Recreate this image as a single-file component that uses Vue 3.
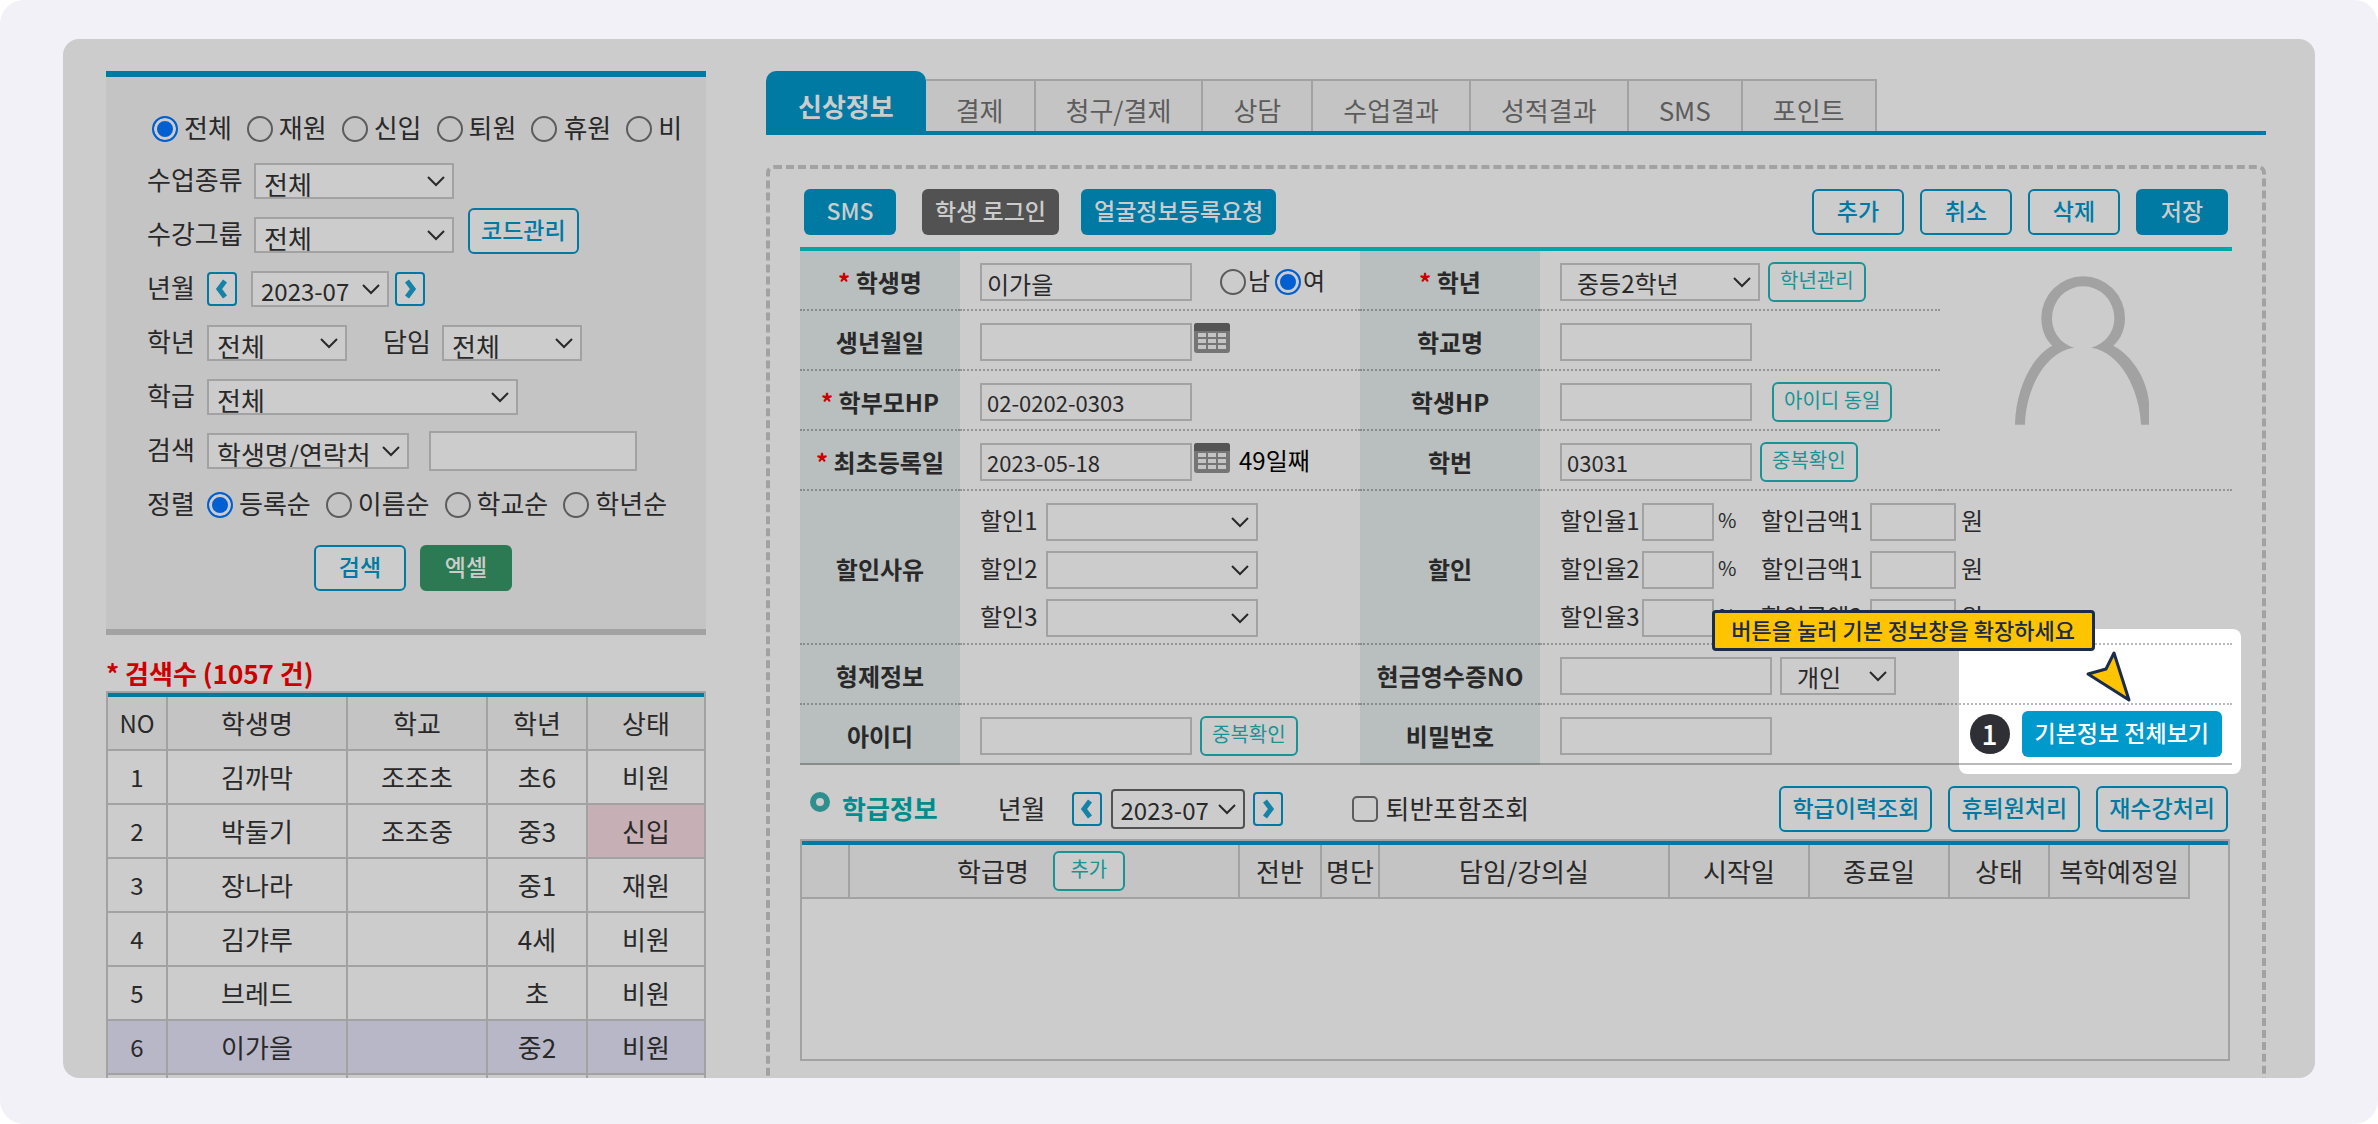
<script setup>
import { ref } from 'vue'

const statusOptions = ['전체', '재원', '신입', '퇴원', '휴원', '비']
const status = ref('전체')
const sortOptions = ['등록순', '이름순', '학교순', '학년순']
const sort = ref('등록순')
const gender = ref('여')

const students = [
  { no: 1, name: '김까막', school: '조조초', grade: '초6', state: '비원' },
  { no: 2, name: '박둘기', school: '조조중', grade: '중3', state: '신입' },
  { no: 3, name: '장나라', school: '', grade: '중1', state: '재원' },
  { no: 4, name: '김갸루', school: '', grade: '4세', state: '비원' },
  { no: 5, name: '브레드', school: '', grade: '초', state: '비원' },
  { no: 6, name: '이가을', school: '', grade: '중2', state: '비원' },
  { no: '', name: '', school: '', grade: '', state: '' },
]
const selectedNo = 6

const tabs = ['신상정보', '결제', '청구/결제', '상담', '수업결과', '성적결과', 'SMS', '포인트']
const activeTab = ref('신상정보')

const reasons = ['할인1', '할인2', '할인3']
const discounts = [
  { rate: '할인율1', amount: '할인금액1' },
  { rate: '할인율2', amount: '할인금액1' },
  { rate: '할인율3', amount: '할인금액2' },
]
</script>

<template>
  <div class="page">
    <div class="panel">
      <aside class="sidebar">
        <form class="search" @submit.prevent>
          <div class="line line-status">
            <label v-for="s in statusOptions" :key="s" class="radio">
              <input v-model="status" type="radio" name="status" :value="s" /><span>{{ s }}</span>
            </label>
          </div>
          <div class="line">
            <label class="wide" for="kind">수업종류</label>
            <select id="kind" class="w200"><option>전체</option></select>
          </div>
          <div class="line">
            <label class="wide" for="group">수강그룹</label>
            <select id="group" class="w200"><option>전체</option></select>
            <button type="button" class="btn outline btn-code">코드관리</button>
          </div>
          <div class="line">
            <label class="short" for="month">년월</label>
            <button type="button" class="step" aria-label="이전 달">
              <svg viewBox="0 0 26 30"><path d="M16 7 L10 15 L16 23" /></svg>
            </button>
            <select id="month" class="month"><option>2023-07</option></select>
            <button type="button" class="step" aria-label="다음 달">
              <svg viewBox="0 0 26 30"><path d="M10 7 L16 15 L10 23" /></svg>
            </button>
          </div>
          <div class="line">
            <label class="short" for="grade">학년</label>
            <select id="grade" class="w140"><option>전체</option></select>
            <label class="teacher" for="teacher">담임</label>
            <select id="teacher" class="w140"><option>전체</option></select>
          </div>
          <div class="line">
            <label class="short" for="class">학급</label>
            <select id="class" class="w310"><option>전체</option></select>
          </div>
          <div class="line">
            <label class="short" for="field">검색</label>
            <select id="field" class="w202"><option>학생명/연락처</option></select>
            <input class="keyword" type="text" aria-label="검색어" />
          </div>
          <div class="line">
            <span class="short">정렬</span>
            <label v-for="s in sortOptions" :key="s" class="radio">
              <input v-model="sort" type="radio" name="sort" :value="s" /><span>{{ s }}</span>
            </label>
          </div>
          <div class="search-actions">
            <button type="submit" class="btn outline">검색</button>
            <button type="button" class="btn excel">엑셀</button>
          </div>
        </form>

        <h2 class="count">* 검색수 (1057 건)</h2>
        <div class="list">
          <table>
            <colgroup><col class="c60" /><col class="c180" /><col class="c140" /><col class="c100" /><col /></colgroup>
            <thead>
              <tr><th class="num">NO</th><th>학생명</th><th>학교</th><th>학년</th><th>상태</th></tr>
            </thead>
            <tbody>
              <tr v-for="s in students" :key="s.no" :class="{ selected: s.no === selectedNo }">
                <td class="num">{{ s.no }}</td>
                <td>{{ s.name }}</td>
                <td>{{ s.school }}</td>
                <td>{{ s.grade }}</td>
                <td :class="{ fresh: s.state === '신입' }">{{ s.state }}</td>
              </tr>
            </tbody>
          </table>
        </div>
      </aside>

      <main class="main">
        <nav class="tabs">
          <button
            v-for="t in tabs" :key="t" type="button"
            :class="['tab', { active: t === activeTab }]" @click="activeTab = t"
          >{{ t }}</button>
        </nav>

        <section class="detail">
          <div class="toolbar">
            <button type="button" class="btn solid sms">SMS</button>
            <button type="button" class="btn dark">학생 로그인</button>
            <button type="button" class="btn solid face">얼굴정보등록요청</button>
            <div class="toolbar-right">
              <button type="button" class="btn outline">추가</button>
              <button type="button" class="btn outline">취소</button>
              <button type="button" class="btn outline">삭제</button>
              <button type="button" class="btn solid">저장</button>
            </div>
          </div>

          <div class="info-wrap">
            <div class="spotlight"></div>
            <table class="info">
              <colgroup><col class="c160" /><col /><col class="c180" /><col /><col class="c292" /></colgroup>
              <tbody>
                <tr>
                  <th><i>*</i> <label for="name">학생명</label></th>
                  <td>
                    <div class="cell">
                      <input id="name" class="field" type="text" value="이가을" />
                      <div class="gender">
                        <label class="radio"><input v-model="gender" type="radio" name="gender" value="남" /><span>남</span></label>
                        <label class="radio"><input v-model="gender" type="radio" name="gender" value="여" /><span>여</span></label>
                      </div>
                    </div>
                  </td>
                  <th><i>*</i> <label for="level">학년</label></th>
                  <td>
                    <div class="cell">
                      <select id="level" class="roomy w200"><option>중등2학년</option></select>
                      <button type="button" class="btn mini">학년관리</button>
                    </div>
                  </td>
                  <td rowspan="4" class="photo">
                    <svg viewBox="0 0 402 445" role="img" aria-label="사진 없음">
                      <path d="M112 208 C90 188 79 158 79 125 A125.500 125 0 0 1 330 125 C330 158 318 188 295 208 C365 245 400 330 402 380 L402 445 L378 445 C374 340 315 225 228 214 C270 203 298 168 298 125 A93.500 95 0 0 0 111 125 C111 168 138 203 178 214 C90 225 32 340 30 445 L0 445 C2 340 50 240 112 208 Z" />
                    </svg>
                  </td>
                </tr>
                <tr>
                  <th><label for="birth">생년월일</label></th>
                  <td>
                    <div class="cell">
                      <input id="birth" class="field" type="text" />
                      <svg class="calendar" viewBox="0 0 36 30">
                        <rect x="0" y="0" width="36" height="30" rx="3" fill="#757575" />
                        <path d="M3 0 H33 Q36 0 36 3 V8 H0 V3 Q0 0 3 0 Z" fill="#555" />
                        <path d="M4 10h8v4h-8z M14 10h8v4h-8z M24 10h8v4h-8z M4 16h8v4h-8z M14 16h8v4h-8z M24 16h8v4h-8z M4 22h8v4h-8z M14 22h8v4h-8z M24 22h8v4h-8z" fill="#c4c4c4" />
                      </svg>
                    </div>
                  </td>
                  <th><label for="school">학교명</label></th>
                  <td><div class="cell"><input id="school" class="field mid" type="text" /></div></td>
                </tr>
                <tr>
                  <th><i>*</i> <label for="parent">학부모HP</label></th>
                  <td><div class="cell"><input id="parent" class="field digits" type="text" value="02-0202-0303" /></div></td>
                  <th><label for="phone">학생HP</label></th>
                  <td>
                    <div class="cell">
                      <input id="phone" class="field mid" type="text" />
                      <button type="button" class="btn mini same">아이디 동일</button>
                    </div>
                  </td>
                </tr>
                <tr>
                  <th><i>*</i> <label for="joined">최초등록일</label></th>
                  <td>
                    <div class="cell">
                      <input id="joined" class="field digits" type="text" value="2023-05-18" />
                      <svg class="calendar" viewBox="0 0 36 30">
                        <rect x="0" y="0" width="36" height="30" rx="3" fill="#757575" />
                        <path d="M3 0 H33 Q36 0 36 3 V8 H0 V3 Q0 0 3 0 Z" fill="#555" />
                        <path d="M4 10h8v4h-8z M14 10h8v4h-8z M24 10h8v4h-8z M4 16h8v4h-8z M14 16h8v4h-8z M24 16h8v4h-8z M4 22h8v4h-8z M14 22h8v4h-8z M24 22h8v4h-8z" fill="#c4c4c4" />
                      </svg>
                      <span class="elapsed">49일째</span>
                    </div>
                  </td>
                  <th><label for="code">학번</label></th>
                  <td>
                    <div class="cell">
                      <input id="code" class="field mid digits" type="text" value="03031" />
                      <button type="button" class="btn mini">중복확인</button>
                    </div>
                  </td>
                </tr>
                <tr>
                  <th>할인사유</th>
                  <td>
                    <div class="stack">
                      <div v-for="(r, i) in reasons" :key="r" class="cell">
                        <label class="reason" :for="'reason' + i">{{ r }}</label>
                        <select :id="'reason' + i" class="roomy w212"><option></option></select>
                      </div>
                    </div>
                  </td>
                  <th>할인</th>
                  <td colspan="2">
                    <div class="stack">
                      <div v-for="(d, i) in discounts" :key="i" class="cell">
                        <label class="rate" :for="'rate' + i">{{ d.rate }}</label>
                        <input :id="'rate' + i" class="field rate-input" type="text" />
                        <span class="percent">%</span>
                        <label class="amount" :for="'amount' + i">{{ d.amount }}</label>
                        <input :id="'amount' + i" class="field amount-input" type="text" />
                        <span class="won">원</span>
                      </div>
                    </div>
                  </td>
                </tr>
                <tr>
                  <th>형제정보</th>
                  <td></td>
                  <th><label for="cash">현금영수증NO</label></th>
                  <td>
                    <div class="cell">
                      <input id="cash" class="field" type="text" />
                      <select class="roomy w116" aria-label="현금영수증 구분"><option>개인</option></select>
                    </div>
                  </td>
                  <td></td>
                </tr>
                <tr>
                  <th><label for="userid">아이디</label></th>
                  <td>
                    <div class="cell">
                      <input id="userid" class="field" type="text" />
                      <button type="button" class="btn mini">중복확인</button>
                    </div>
                  </td>
                  <th><label for="pw">비밀번호</label></th>
                  <td><div class="cell"><input id="pw" class="field" type="password" /></div></td>
                  <td class="expand">
                    <div class="expand-row">
                      <span class="badge">1</span>
                      <button type="button" class="btn bright">기본정보 전체보기</button>
                    </div>
                  </td>
                </tr>
              </tbody>
            </table>
            <div class="tip">버튼을 눌러 기본 정보창을 확장하세요</div>
            <svg class="pointer" viewBox="0 0 48 54">
              <path d="M29 4 L44 51 L3 25 L21 20 Z" fill="#ffc400" stroke="#1a2b4c" stroke-width="3" stroke-linejoin="round" />
            </svg>
          </div>

          <div class="class-bar">
            <span class="ring"></span>
            <h3>학급정보</h3>
            <label class="ym" for="cmonth">년월</label>
            <button type="button" class="step" aria-label="이전 달">
              <svg viewBox="0 0 26 30"><path d="M16 7 L10 15 L16 23" /></svg>
            </button>
            <select id="cmonth" class="class-month"><option>2023-07</option></select>
            <button type="button" class="step" aria-label="다음 달">
              <svg viewBox="0 0 26 30"><path d="M10 7 L16 15 L10 23" /></svg>
            </button>
            <label class="check"><input type="checkbox" /><span>퇴반포함조회</span></label>
            <div class="toolbar-right">
              <button type="button" class="btn outline">학급이력조회</button>
              <button type="button" class="btn outline">휴퇴원처리</button>
              <button type="button" class="btn outline">재수강처리</button>
            </div>
          </div>

          <div class="classes">
            <table>
              <colgroup>
                <col class="c48" /><col class="c390" /><col class="c82" /><col class="c58" /><col />
                <col class="c140" /><col class="c140" /><col class="c100" /><col class="c140" /><col class="c38" />
              </colgroup>
              <thead>
                <tr>
                  <th></th>
                  <th><div class="class-name">학급명<button type="button" class="btn mini add">추가</button></div></th>
                  <th>전반</th>
                  <th>명단</th>
                  <th>담임/강의실</th>
                  <th>시작일</th>
                  <th>종료일</th>
                  <th>상태</th>
                  <th>복학예정일</th>
                  <td></td>
                </tr>
              </thead>
              <tbody>
                <tr><td colspan="10" class="empty"></td></tr>
              </tbody>
            </table>
          </div>
        </section>
      </main>
    </div>
  </div>
</template>

<style>
body {
  background: #fff;
}
</style>

<style scoped>
* {
  box-sizing: border-box;
}
.page {
  height: 100vh;
  padding: 39px 63px 46px;
  background: #f2f1f7;
  border-radius: 24px;
  font-family: "Noto Sans CJK KR", "Noto Sans", sans-serif;
  font-size: 26px;
  color: #292929;
}
.panel {
  display: flex;
  gap: 60px;
  height: 100%;
  padding: 32px 49px 0 43px;
  overflow: hidden;
  background: #ccc;
  border-radius: 16px;
}
button, input, select {
  margin: 0;
  font-family: inherit;
  color: inherit;
}
h2, h3 {
  margin: 0;
}
table {
  width: 100%;
  table-layout: fixed;
  border-spacing: 0;
}
.c38 { width: 38px; }
.c48 { width: 48px; }
.c58 { width: 58px; }
.c60 { width: 60px; }
.c82 { width: 82px; }
.c100 { width: 100px; }
.c140 { width: 140px; }
.c160 { width: 160px; }
.c180 { width: 180px; }
.c292 { width: 292px; }
.c390 { width: 390px; }

/* controls */
select {
  appearance: none;
  height: 36px;
  padding: 0 28px 0 8px;
  border: 2px solid #a2a2a2;
  border-radius: 0;
  font-size: 26px;
  background: #ccc url("data:image/svg+xml,%3Csvg xmlns='http://www.w3.org/2000/svg' width='18' height='11'%3E%3Cpath d='M1 1 L9 9 L17 1' fill='none' stroke='%23292929' stroke-width='2'/%3E%3C/svg%3E") no-repeat right 7px center;
}
select.roomy {
  height: 38px;
  padding: 0 28px 0 15px;
  font-size: 24px;
}
.w116 { width: 116px; }
.w140 { width: 140px; }
.w200 { width: 200px; }
.w202 { width: 202px; }
.w212 { width: 212px; }
.w310 { width: 311px; }
input[type="text"],
input[type="password"] {
  border: 2px solid #a2a2a2;
  border-radius: 0;
  background: #ccc;
  outline: none;
}
input[type="radio"] {
  appearance: none;
  flex: none;
  width: 26px;
  height: 26px;
  border: 2px solid #5c5c5c;
  border-radius: 50%;
}
input[type="radio"]:checked {
  border-color: #005fd1;
  background: #005fd1;
  box-shadow: inset 0 0 0 3px #ccc;
}
.radio {
  display: flex;
  align-items: center;
  gap: 6px;
}
.radio span {
  padding-bottom: 4px;
}
.btn {
  flex: none;
  min-width: 92px;
  height: 46px;
  padding: 0 11px 4px;
  border: 2px solid transparent;
  border-radius: 6px;
  font-size: 23px;
  font-weight: 500;
  line-height: 32px;
  white-space: nowrap;
}
.outline {
  color: #007aa3;
  border-color: #007aa3;
  background: #ccc;
}
.solid {
  color: #ccc;
  background: #007aa3;
}
.dark {
  color: #ccc;
  background: #525252;
}
.excel {
  color: #ccc;
  background: #2b7a53;
}
.bright {
  color: #fff;
  background: #09c;
}
.mini {
  min-width: 72px;
  height: 40px;
  padding: 0 10px 4px;
  font-size: 20px;
  font-weight: 400;
  line-height: 28px;
  color: #199393;
  border-color: #199393;
  background: #ccc;
}
.step {
  flex: none;
  width: 30px;
  height: 34px;
  padding: 0;
  border: 2px solid #007aa3;
  border-radius: 4px;
  background: #ccc;
}
.step svg {
  display: block;
  width: 26px;
  height: 30px;
}
.step path {
  fill: none;
  stroke: #1583a8;
  stroke-width: 5;
}

/* sidebar */
.sidebar {
  flex: 0 0 600px;
}
.search {
  padding: 27px 0 38px 41px;
  border-top: 6px solid #007aa3;
  border-bottom: 6px solid #a2a2a2;
  background: #c4c4c4;
}
.line {
  display: flex;
  align-items: center;
  height: 54px;
  white-space: nowrap;
}
.line .radio {
  margin-right: 15px;
}
.line .radio span {
  padding-bottom: 6px;
}
.line-status {
  height: 50px;
  padding-left: 5px;
}
.wide {
  width: 107px;
  padding-bottom: 6px;
}
.short {
  width: 60px;
  padding-bottom: 6px;
}
.btn-code {
  align-self: flex-start;
  margin-left: 14px;
}
.month {
  width: 138px;
  margin: 0 6px 0 14px;
  font-size: 24px;
}
.teacher {
  width: 95px;
  padding: 0 0 6px 36px;
}
.keyword {
  width: 208px;
  height: 40px;
  margin-left: 20px;
  font-size: 24px;
}
.search-actions {
  display: flex;
  gap: 14px;
  margin: 13px 0 0 167px;
}
.count {
  margin-top: 20px;
  font-size: 26px;
  line-height: 36px;
  color: #c00;
}
.list {
  border: 2px solid #a2a2a2;
}
.list table {
  border-top: 4px solid #007aa3;
}
.list th,
.list td {
  height: 54px;
  padding: 0;
  border: solid #a2a2a2;
  border-width: 0 2px 2px 0;
  font-weight: 400;
  line-height: 36px;
  text-align: center;
}
.list th:last-child,
.list td:last-child {
  border-right: 0;
}
.list th {
  background: #c4c4c4;
}
.list .num {
  font-size: 24px;
}
.list .fresh {
  background: #c6b0b5;
}
.list .selected td {
  background: #b8b7c8;
}

/* tabs */
.main {
  flex: 1;
  min-width: 0;
}
.tabs {
  display: flex;
  align-items: flex-end;
  height: 64px;
  border-bottom: 4px solid #007aa3;
}
.tab {
  height: 52px;
  padding: 8px 30px 0;
  border: solid #a2a2a2;
  border-width: 2px 2px 0 0;
  font-size: 26px;
  line-height: 36px;
  white-space: nowrap;
  color: #5c5c5c;
  background: #c4c4c4;
}
.tab.active {
  height: 60px;
  padding: 10px 32px 0;
  border: 0;
  border-radius: 10px 10px 0 0;
  font-weight: 700;
  color: #ccc;
  background: #007aa3;
}

/* detail */
.detail {
  margin-top: 30px;
  padding: 20px 30px 60px;
  border: 4px dashed #a2a2a2;
  border-radius: 8px;
}
.toolbar {
  display: flex;
  padding: 0 4px;
  margin-bottom: 12px;
}
.sms {
  margin-right: 26px;
}
.face {
  margin-left: 22px;
}
.toolbar-right {
  display: flex;
  gap: 16px;
  margin-left: auto;
}
.info-wrap {
  position: relative;
  border-top: 4px solid #00a5a5;
}
.spotlight {
  position: absolute;
  right: -9px;
  bottom: -9px;
  width: 282px;
  height: 145px;
  border-radius: 8px;
  background: #fff;
}
.info {
  position: relative;
  font-size: 24px;
  line-height: 34px;
}
.info th,
.info td {
  height: 60px;
  border-bottom: 2px dotted rgba(0, 0, 0, 0.27);
}
.info tr:last-child > * {
  border-bottom-style: solid;
}
.info th {
  padding: 4px 0 0;
  background: #b9bfbf;
  font-weight: 700;
}
.info th i {
  font-style: normal;
  color: #c00;
}
.info td {
  padding: 12px 0 6px 20px;
  vertical-align: top;
}
.cell {
  display: flex;
  align-items: center;
  height: 38px;
  white-space: nowrap;
}
.stack {
  display: flex;
  flex-direction: column;
  gap: 10px;
}
.field {
  width: 212px;
  height: 38px;
  padding: 2px 5px 0;
  font-size: 24px;
}
.digits {
  padding-top: 0;
  font-size: 22px;
}
.mid {
  width: 192px;
}
.cell .mini,
.cell .w116 {
  margin-left: 8px;
}
.cell .same {
  margin-left: 20px;
}
.gender {
  display: flex;
  gap: 5px;
  margin-left: 28px;
}
.gender .radio {
  gap: 2px;
}
.calendar {
  align-self: flex-start;
  width: 36px;
  height: 30px;
  margin-left: 2px;
}
.elapsed {
  margin-left: 9px;
  padding-bottom: 4px;
  color: #000;
}
.reason {
  width: 66px;
  padding-bottom: 4px;
}
.rate {
  width: 82px;
  padding-bottom: 4px;
}
.rate-input {
  width: 72px;
}
.percent {
  width: 47px;
  padding: 0 0 4px 4px;
  font-size: 20px;
}
.amount {
  width: 109px;
  padding-bottom: 4px;
}
.amount-input {
  width: 86px;
}
.won {
  padding: 0 0 4px 5px;
}
.info .photo {
  padding: 25px 8px 0 0;
  text-align: center;
}
.photo svg {
  width: 134px;
  height: 149px;
}
.photo path {
  fill: #a2a2a2;
}
.info .expand {
  padding: 6px 10px;
}
.expand-row {
  display: flex;
  align-items: center;
  justify-content: flex-end;
  gap: 12px;
}
.badge {
  width: 40px;
  height: 40px;
  border-radius: 50%;
  background: #2f3036;
  color: #fff;
  font-size: 28px;
  font-weight: 500;
  line-height: 38px;
  text-align: center;
}
.tip {
  position: absolute;
  right: 137px;
  bottom: 114px;
  padding: 0 17px 2px 16px;
  border: 3px solid #1a2b4c;
  border-radius: 4px;
  background: #ffc400;
  color: #1a2b4c;
  font-size: 22px;
  font-weight: 500;
  line-height: 33px;
  white-space: nowrap;
}
.pointer {
  position: absolute;
  right: 99px;
  bottom: 62px;
  width: 48px;
  height: 54px;
}

/* classes */
.class-bar {
  display: flex;
  align-items: center;
  height: 46px;
  margin: 21px 0 7px;
  padding: 0 4px 0 10px;
  white-space: nowrap;
}
.ring {
  align-self: flex-start;
  width: 20px;
  height: 20px;
  margin: 6px 12px 0 0;
  border: 6px solid #2f8f8f;
  border-radius: 50%;
}
.class-bar h3 {
  padding-bottom: 4px;
  font-size: 26px;
  color: #008c8c;
}
.ym {
  margin: 0 26px 0 60px;
  padding-bottom: 4px;
}
.class-bar .class-month {
  width: 134px;
  height: 40px;
  margin: 0 8px 0 9px;
  border-color: #525252;
  border-radius: 4px;
  font-size: 24px;
}
.check {
  display: flex;
  align-items: center;
  gap: 8px;
  margin-left: 69px;
}
.check span {
  padding-bottom: 4px;
}
.check input {
  appearance: none;
  width: 26px;
  height: 26px;
  border: 2px solid #5c5c5c;
  border-radius: 5px;
}
.classes {
  margin-right: 2px;
  border: 2px solid #a2a2a2;
}
.classes table {
  border-top: 4px solid #007aa3;
}
.classes th {
  height: 54px;
  padding: 0;
  border: solid #a2a2a2;
  border-width: 0 2px 2px 0;
  background: #c4c4c4;
  font-weight: 400;
  line-height: 36px;
  white-space: nowrap;
}
.class-name {
  display: flex;
  align-items: center;
  justify-content: center;
  gap: 24px;
  padding-right: 6px;
  line-height: 32px;
}
.classes td {
  padding: 0;
}
.classes .empty {
  height: 160px;
}
</style>
